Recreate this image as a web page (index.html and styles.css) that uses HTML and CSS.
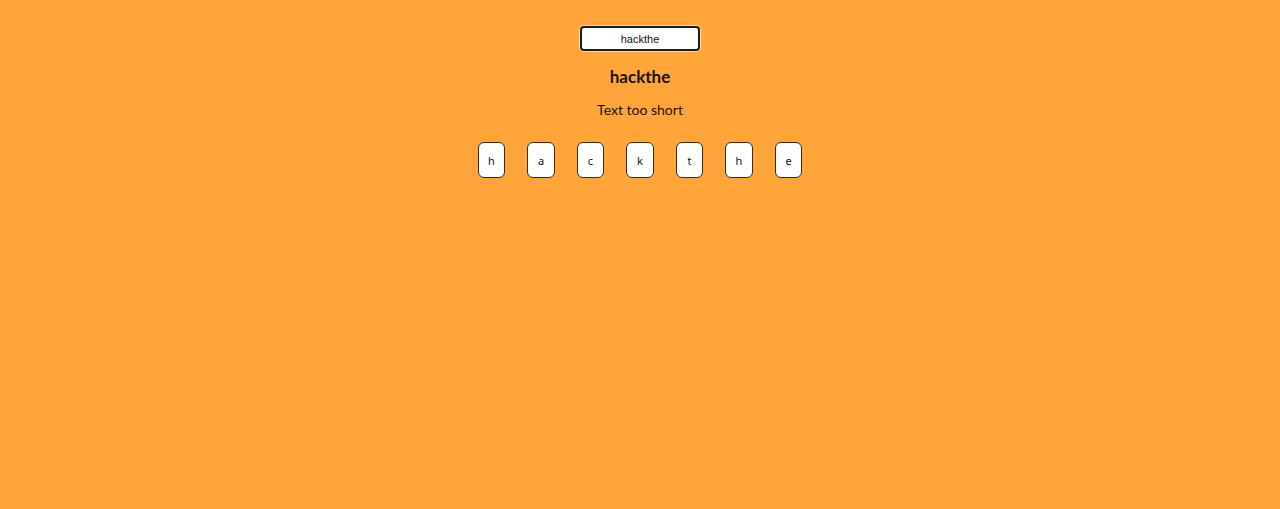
FILE: index.html
```html
<!DOCTYPE html>
<html>
<head>
<meta charset="utf-8">
<link rel="stylesheet" href="styles.css">
</head>
<body>
<main class="app">
  <input class="word-input" type="text" value="hackthe">
  <h1 class="title">hackthe</h1>
  <p class="status">Text too short</p>
  <div class="letters">
    <span class="letter">h</span>
    <span class="letter">a</span>
    <span class="letter">c</span>
    <span class="letter">k</span>
    <span class="letter">t</span>
    <span class="letter">h</span>
    <span class="letter">e</span>
  </div>
</main>
</body>
</html>
```
FILE: styles.css
```css
html, body {
  margin: 0;
  padding: 0;
  height: 100%;
  background: #ffa53a;
}
body {
  font-family: Lato, "Noto Sans", sans-serif;
  color: #1a1206;
}
.app {
  display: flex;
  flex-direction: column;
  align-items: center;
  padding-top: 26px;
}
.word-input {
  box-sizing: border-box;
  width: 120px;
  height: 25px;
  margin: 0;
  border: 2px solid #1c1c1c;
  border-radius: 4px;
  background: #fff;
  box-shadow: 0 0 0 1px #fbd9a8;
  font-family: "Liberation Sans", Arial, sans-serif;
  font-size: 11px;
  text-align: center;
  color: #111;
  outline: none;
}
.title {
  margin: 15px 0 0;
  font-size: 17px;
  line-height: 22px;
  font-weight: 700;
}
.status {
  margin: 12px 0 0;
  font-size: 14px;
  line-height: 20px;
}
.letters {
  display: flex;
  gap: 22px;
  margin-top: 22px;
}
.letter {
  box-sizing: border-box;
  display: flex;
  align-items: center;
  justify-content: center;
  width: 27.5px;
  height: 36px;
  background: #fff;
  border: 1px solid #3a2a14;
  border-radius: 6px;
  font-family: "Noto Sans", sans-serif;
  font-size: 11px;
}
```
